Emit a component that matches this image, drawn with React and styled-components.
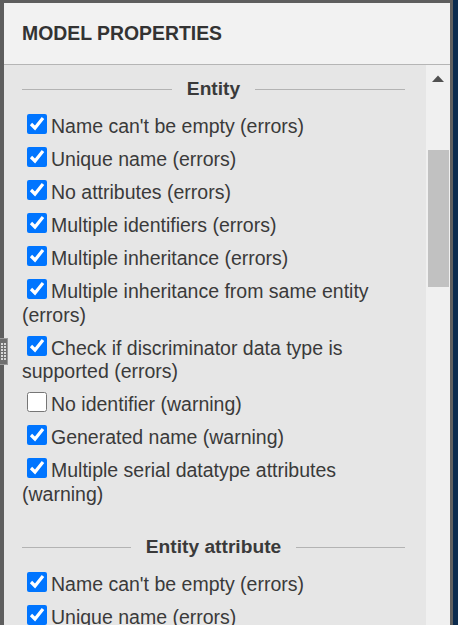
import React from 'react';
import styled, { createGlobalStyle } from 'styled-components';

const GlobalStyle = createGlobalStyle`
  html, body {
    margin: 0;
    padding: 0;
    overflow: hidden;
    background: #0b2b4e;
  }
  body {
    font-family: "Liberation Sans", Arial, sans-serif;
  }
`;

const Frame = styled.div`
  position: relative;
  width: 446px;
  height: 640px;
  border-top: 3px solid #5e5e5e;
  border-left: 4px solid #5e5e5e;
  border-right: 3px solid #5e5e5e;
  display: flex;
  flex-direction: column;
  background: #e6e6e6;
`;

const Header = styled.div`
  height: 61px;
  flex-shrink: 0;
  display: flex;
  align-items: center;
  padding-left: 18px;
  background: #f2f2f2;
  border-bottom: 1px solid #b5b5b5;
`;

const Title = styled.h1`
  margin: 0;
  font-size: 19.4px;
  font-weight: bold;
  color: #333;
`;

const Body = styled.div`
  flex: 1;
  min-height: 0;
  display: flex;
`;

const Content = styled.div`
  flex: 1;
  min-width: 0;
  overflow: hidden;
  padding: 0 21px 0 18px;
`;

const Section = styled.section`
  padding-top: 12px;
  & + & {
    margin-top: 17px;
  }
`;

const Heading = styled.div`
  display: flex;
  align-items: center;
  gap: 15px;
  height: 24px;
  line-height: 24px;
  font-size: 19.2px;
  font-weight: bold;
  color: #3a3a3a;
  &::before,
  &::after {
    content: '';
    flex: 1;
    height: 1px;
    background: #b3b3b3;
  }
`;

const List = styled.div`
  margin-top: 13px;
`;

const Item = styled.label`
  display: block;
  font-size: 19.5px;
  line-height: 23.5px;
  color: #3a3a3a;
  margin-bottom: 8.5px;
`;

const Check = styled.input.attrs({ type: 'checkbox' })`
  width: 20px;
  height: 20px;
  margin: 0 4px 0 5px;
  vertical-align: -1px;
  accent-color: #0075ff;
`;

const ScrollBar = styled.div`
  width: 24px;
  flex-shrink: 0;
  background: #f0f0f0;
  display: flex;
  flex-direction: column;
`;

const ArrowButton = styled.div`
  height: 26px;
  display: flex;
  align-items: center;
  justify-content: center;
  flex-shrink: 0;
`;

const Track = styled.div`
  flex: 1;
  padding: 59px 1px 0 2px;
`;

const Thumb = styled.div`
  height: 137px;
  background: #c1c1c1;
`;

const Handle = styled.div`
  position: absolute;
  left: -4px;
  top: 335px;
  width: 8px;
  height: 27px;
  background: #6f6f6f;
  border: 1px solid #9a9a9a;
  border-left: none;
  box-sizing: border-box;
  display: flex;
  align-items: center;
  justify-content: center;
`;

const Arrow = ({ down }) => (
  <svg width="12" height="7" viewBox="0 0 12 7">
    <polygon
      points={down ? '0,0 12,0 6,6.5' : '6,0.5 12,7 0,7'}
      fill="#505050"
    />
  </svg>
);

const Grip = () => (
  <svg width="5" height="17" viewBox="0 0 5 17">
    {[0, 1, 2, 3, 4, 5].map(r =>
      [0, 1].map(c => (
        <rect key={`${r}-${c}`} x={c * 3} y={r * 3} width="2" height="2" fill="#d8d8d8" />
      ))
    )}
  </svg>
);

const sections = [
  {
    title: 'Entity',
    items: [
      { label: "Name can't be empty (errors)", checked: true },
      { label: 'Unique name (errors)', checked: true },
      { label: 'No attributes (errors)', checked: true },
      { label: 'Multiple identifiers (errors)', checked: true },
      { label: 'Multiple inheritance (errors)', checked: true },
      { label: 'Multiple inheritance from same entity (errors)', checked: true },
      { label: 'Check if discriminator data type is supported (errors)', checked: true },
      { label: 'No identifier (warning)', checked: false },
      { label: 'Generated name (warning)', checked: true },
      { label: 'Multiple serial datatype attributes (warning)', checked: true },
    ],
  },
  {
    title: 'Entity attribute',
    items: [
      { label: "Name can't be empty (errors)", checked: true },
      { label: 'Unique name (errors)', checked: true },
    ],
  },
];

const App = () => {
  return (
    <>
      <GlobalStyle />
      <Frame>
        <Header>
          <Title>MODEL PROPERTIES</Title>
        </Header>
        <Body>
          <Content>
            {sections.map(section => (
              <Section key={section.title}>
                <Heading>{section.title}</Heading>
                <List>
                  {section.items.map(item => (
                    <Item key={item.label}>
                      <Check defaultChecked={item.checked} />
                      {item.label}
                    </Item>
                  ))}
                </List>
              </Section>
            ))}
          </Content>
          <ScrollBar>
            <ArrowButton><Arrow /></ArrowButton>
            <Track><Thumb /></Track>
            <ArrowButton><Arrow down /></ArrowButton>
          </ScrollBar>
        </Body>
        <Handle><Grip /></Handle>
      </Frame>
    </>
  );
};

export default App;
